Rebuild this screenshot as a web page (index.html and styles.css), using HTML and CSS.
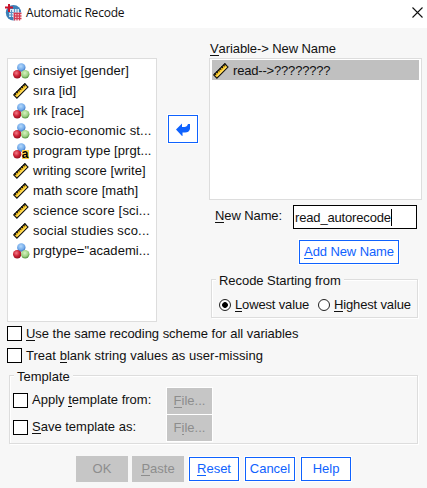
FILE: index.html
```html
<!DOCTYPE html>
<html lang="en">
<head>
<meta charset="utf-8">
<title>Automatic Recode</title>
<link rel="stylesheet" href="styles.css">
</head>
<body>
<svg class="defs" aria-hidden="true">
  <defs>
    <radialGradient id="blue" cx=".45" cy=".35" r=".6"><stop offset="0" stop-color="#b4d8fb"/><stop offset=".7" stop-color="#72aaea"/><stop offset="1" stop-color="#3f78c4"/></radialGradient>
    <radialGradient id="red" cx=".4" cy=".35" r=".65"><stop offset="0" stop-color="#f27c88"/><stop offset=".55" stop-color="#cf2438"/><stop offset="1" stop-color="#931020"/></radialGradient>
    <radialGradient id="green" cx=".45" cy=".35" r=".6"><stop offset="0" stop-color="#d6f2c0"/><stop offset=".7" stop-color="#9bd080"/><stop offset="1" stop-color="#5b9a48"/></radialGradient>
    <symbol id="nominal" viewBox="0 0 17 16">
      <circle cx="8.300" cy="4.500" r="4.200" fill="url(#blue)"/>
      <circle cx="4.200" cy="11.300" r="4.200" fill="url(#red)"/>
      <circle cx="12.200" cy="11.300" r="4.200" fill="url(#green)"/>
    </symbol>
    <symbol id="string" viewBox="0 0 17 16">
      <circle cx="8.300" cy="4.500" r="4.200" fill="url(#blue)"/>
      <circle cx="4.200" cy="11.300" r="4.200" fill="url(#red)"/>
      <rect x="9" y="7" width="7" height="9" fill="#fbd34a"/>
      <text x="8.700" y="15" class="glyph">a</text>
    </symbol>
    <symbol id="scale" viewBox="0 0 17 16">
      <path d="M.7 12 11.800 .9 15 4.100 3.900 15.200Z" fill="#fbc926" stroke="#111" stroke-width="1.100"/>
      <path d="M1.900 11.400 12.600 .7" stroke="#111" stroke-width="2.200" stroke-dasharray="1.200 1.200"/>
      <path d="M4.100 13.200 13.600 3.700" stroke="#ffe88c" stroke-width="1"/>
    </symbol>
  </defs>
</svg>
<header class="titlebar">
  <svg class="app" viewBox="0 0 17 17">
    <circle cx="8.500" cy="8.700" r="7.700" fill="#3c80b8"/>
    <path d="M4 5h10v8H4z" fill="#d7e8f5"/>
    <path d="M4 8.500h9M4 11h5M6.500 6v7M9.500 5v5M12 5v4" stroke="#5b94c4" stroke-width="1"/>
    <path d="M4 0v8M0 3.500h8" stroke="#c9142c" stroke-width="2"/>
    <rect x="8.500" y="8.500" width="8" height="8" fill="#fff"/>
    <path d="M8.500 9.500h8M8.500 12h8M8.500 14.500h8M9.500 8.500v8M12 8.500v8M14.500 8.500v8" stroke="#d43a50" stroke-width="1.300"/>
  </svg>
  <span class="caption">Automatic Recode</span>
  <svg class="close" viewBox="0 0 11 11"><path d="M.5.5l10 10M10.500.5l-10 10" stroke="#111" stroke-width="1.100"/></svg>
</header>
<main>
  <section class="top">
    <ul class="list source">
      <li><svg><use href="#nominal"/></svg><span>cinsiyet [gender]</span></li>
      <li><svg><use href="#scale"/></svg><span>sıra [id]</span></li>
      <li><svg><use href="#nominal"/></svg><span>ırk [race]</span></li>
      <li class="wide"><svg><use href="#nominal"/></svg><span>socio-economic st...</span></li>
      <li><svg><use href="#string"/></svg><span>program type [prgt...</span></li>
      <li><svg><use href="#scale"/></svg><span>writing score [write]</span></li>
      <li><svg><use href="#scale"/></svg><span>math score [math]</span></li>
      <li class="wide"><svg><use href="#scale"/></svg><span>science score [sci...</span></li>
      <li class="wide"><svg><use href="#scale"/></svg><span>social studies sco...</span></li>
      <li><svg><use href="#nominal"/></svg><span>prgtype="academi...</span></li>
    </ul>
    <button class="move" aria-label="Move"><svg viewBox="0 0 14 13"><path d="M0 6.500 6 .500V4h2.500Q11 4 12 1h2v5q-1 3.500-5 3.500H6.500V13H6Z" fill="#0f62fe"/></svg></button>
    <div class="right">
      <div class="label"><u>V</u>ariable-&gt; New Name</div>
      <ul class="list target">
        <li class="selected"><svg><use href="#scale"/></svg><span>read--&gt;????????</span></li>
      </ul>
      <div class="rename"><label><u>N</u>ew Name:</label><div class="input">read_autorecode<i class="caret"></i></div></div>
      <button class="btn add"><u>A</u>dd New Name</button>
      <div class="group recode">
        <span class="legend">Recode Starting from</span>
        <div class="radios">
          <i class="radio on"></i><span class="lowest"><u>L</u>owest value</span>
          <i class="radio"></i><span><u>H</u>ighest value</span>
        </div>
      </div>
    </div>
  </section>
  <div class="check"><i class="box"></i><span class="same"><u>U</u>se the same recoding scheme for all variables</span></div>
  <div class="check second"><i class="box"></i><span class="blank">Treat <u>b</u>lank string values as user-missing</span></div>
  <div class="group template">
    <span class="legend">Template</span>
    <div class="trow"><i class="box"></i><span>Apply <u>t</u>emplate from:</span><button class="btn off file"><u>F</u>ile...</button></div>
    <div class="trow"><i class="box"></i><span><u>S</u>ave template as:</span><button class="btn off file">F<u>i</u>le...</button></div>
  </div>
  <footer>
    <button class="btn off">OK</button>
    <button class="btn off paste"><u>P</u>aste</button>
    <button class="btn"><u>R</u>eset</button>
    <button class="btn">Cancel</button>
    <button class="btn">Help</button>
  </footer>
</main>
</body>
</html>
```
FILE: styles.css
```css
* { box-sizing: border-box; }
body {
  margin: 0;
  width: 427px;
  height: 488px;
  overflow: hidden;
  background: #f7f7f7;
  color: #111;
  font: 13px/16px "Liberation Sans", Arial, sans-serif;
  white-space: nowrap;
}
ul { margin: 0; padding: 0; list-style: none; }
u { text-decoration: none; border-bottom: 1px solid currentColor; display: inline-block; height: 15px; }
button { font: inherit; padding: 0; margin: 0; }
.defs { display: block; width: 0; height: 0; }
.glyph { font: bold 12px "Liberation Sans", sans-serif; fill: #000; }
.titlebar { display: flex; height: 28px; background: #fff; padding: 4px 4px 0 5px; }
.app { width: 17px; height: 17px; }
.caption { margin: 1px 0 0 4px; font: 12px/16px "Open Sans", sans-serif; letter-spacing: -.2px; }
.close { width: 11px; height: 11px; margin: 3px 0 0 auto; }
main { padding: 0 5px 0 7px; }
.top { display: flex; height: 298px; }
.list { background: #fff; border: 1px solid #ddd; }
.source { width: 150px; height: 264px; margin-top: 30px; padding-top: 2px; letter-spacing: .07px; }
.source .wide { letter-spacing: .18px; }
.list li { display: flex; align-items: center; height: 20px; padding-left: 5px; }
.list svg { width: 17px; height: 16px; margin-right: 3px; }
.move { width: 30px; height: 28px; margin: 87px 11px 0; background: #fff; border: 1px solid #0f62fe; box-shadow: 0 0 0 1px #fff; }
.move svg { display: block; width: 14px; height: 13px; margin: 0 auto; }
.right { width: 213px; padding-top: 13px; }
.label { margin-left: 1px; height: 17px; letter-spacing: -.09px; }
.target { height: 142px; padding: 1px 2px; letter-spacing: -.18px; }
.list.target li { padding: 1px 0 0 1px; }
.selected { background: #c0c0c0; }
.rename { display: flex; height: 24px; margin: 5px 0 0 6px; letter-spacing: -.1px; }
.rename label { width: 78px; padding-top: 3px; }
.input { display: flex; width: 124px; height: 24px; align-items: center; border: 1px solid #000; background: #fff; padding: 1px 0 0 1px; letter-spacing: -.16px; }
.caret { width: 1px; height: 17px; margin-top: -1px; background: #000; }
.btn { width: 50px; height: 24px; color: #0f62fe; border: 1px solid #0f62fe; background: #fff; box-shadow: 0 0 0 1px #fff; }
.add { display: block; width: 100px; margin: 11px 0 0 90px; letter-spacing: -.1px; }
.group { border: 1px solid #ddd; box-shadow: 1px 1px 0 #fff, inset 1px 1px 0 #fff; }
.legend { display: block; width: max-content; background: #f7f7f7; padding: 0 3px; }
.recode { width: 207px; height: 39px; margin: 15px 0 0 2px; }
.recode .legend { margin: -7px 0 0 4px; letter-spacing: -.05px; }
.radios { display: flex; align-items: center; margin: 8px 0 0 7px; letter-spacing: -.15px; }
.radio { width: 12px; height: 12px; border: 1px solid #222; border-radius: 50%; background: #fff; margin-right: 4px; }
.on { background: radial-gradient(#000 2.5px, #fff 3.2px); }
.lowest { width: 83px; }
.check, .trow { display: flex; align-items: center; }
.check { height: 15px; }
.second { margin-top: 7px; }
.same { letter-spacing: -.03px; }
.blank { letter-spacing: .03px; }
.box { width: 15px; height: 15px; border: 1px solid #000; background: #fff; margin-right: 4px; }
.template { width: 409px; height: 69px; margin: 12px 0 0 2px; }
.template .legend { margin: -7px 0 0 4px; }
.trow { height: 26px; margin: 3px 0 0 3px; }
.trow + .trow { margin-top: 1px; }
.trow .box { margin-top: -2px; }
.trow span { width: 135px; margin-top: -2px; }
.off { height: 26px; background: #c6c6c6; color: #8d8d8d; border: 0; }
.file { width: 45px; }
footer { display: flex; align-items: center; gap: 6px; margin: 12px 0 0 69px; }
footer .off { width: 52px; box-shadow: none; }
footer .paste { margin: 0 -1px 0 -2px; }
```
